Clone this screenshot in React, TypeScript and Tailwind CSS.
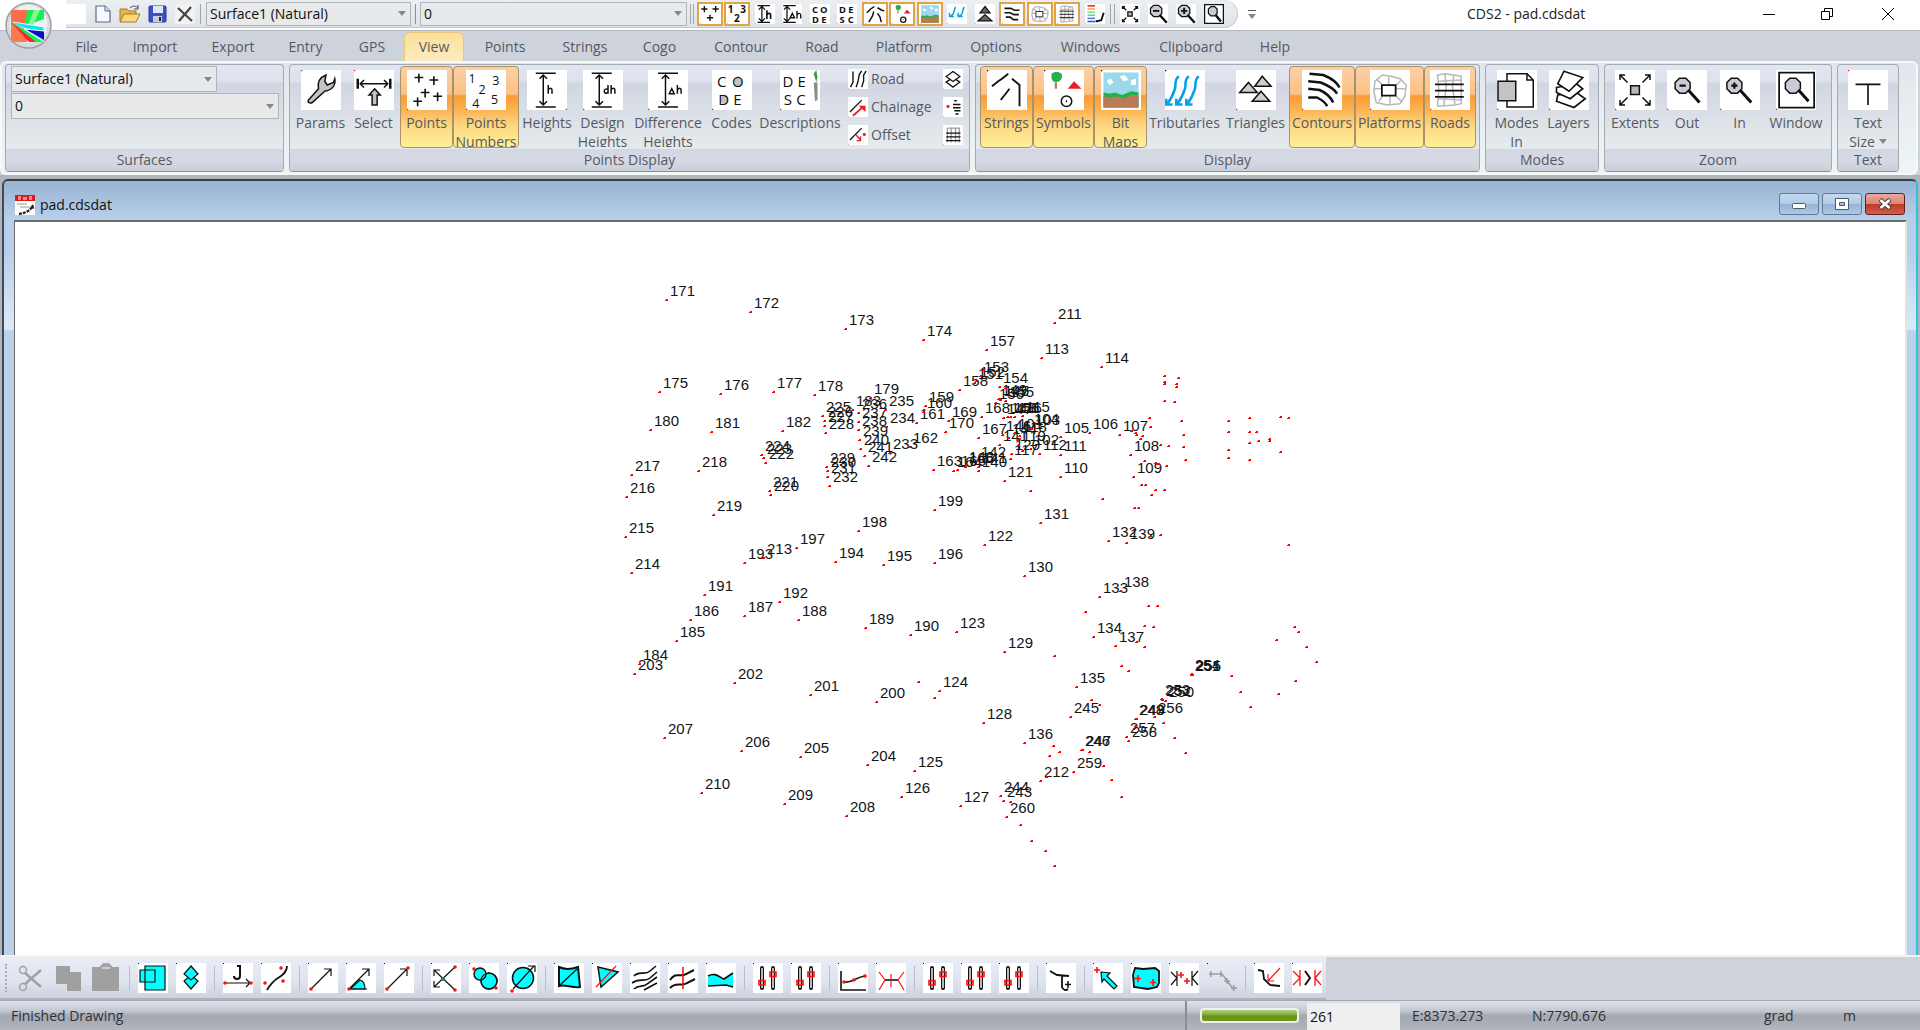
import { Fragment, type ReactNode } from "react";

const HOT = "border border-[#a89468] bg-[linear-gradient(180deg,#fbd0a8_0%,#fcc184_34%,#fb9a38_36%,#fcb04f_52%,#fdd882_74%,#fff09a_100%)]";

/* ---------- ribbon icons, drawn on a 32 x 32 grid ---------- */
const ICONS: Record<string, ReactNode> = {
  params: (
    <path d="M6 24 14 15C13 10 15 6 20 4L19 9 21 12 26 10 27 7C28 12 25 16 19 17L9 26C7 27 5 26 6 24Z" fill="#c4c4c4" />
  ),
  select: (
    <>
      <path d="M3 7V15M29 7V15" strokeWidth="2" />
      <path d="M5 11H27M8 8 5 11 8 14M24 8 27 11 24 14" />
      <path d="M16.500 15 21 20H18.500V28H14.500V20H12Z" fill="#c4c4c4" />
    </>
  ),
  points: <path d="M6 6H13M9.500 3V10M18 8H25M21.500 5V12M11 18H18M14.500 15V22M5 25H12M8.500 22V29M21 21H28M24.500 18V25" strokeWidth="1.300" />,
  points3: <path d="M2 8H12M7 3V13M20 8H30M25 3V13M11 22H21M16 17V27" strokeWidth="2.200" />,
  numbers: (
    <g stroke="none" fill="#111" fontSize="10" fontFamily="Open Sans, sans-serif">
      <text x="2" y="10">1</text><text x="21" y="12">3</text><text x="10" y="19">2</text><text x="5" y="30">4</text><text x="20" y="27">5</text>
    </g>
  ),
  numbers3: (
    <g stroke="none" fill="#111" fontSize="16" fontWeight="700" fontFamily="Open Sans, sans-serif">
      <text x="1" y="14">1</text><text x="21" y="14">3</text><text x="11" y="29">2</text>
    </g>
  ),
  heights: (
    <>
      <path d="M7 2.500H23M7 29.500H23M13 4V28M10 7 13 4 16 7M10 25 13 28 16 25" />
      <path d="M17 12V19M17 16C18 14 20 14 20 16V19" strokeWidth="1.200" />
    </>
  ),
  heights2: (
    <>
      <path d="M4 2.500H24M4 29.500H24M11 4V28M6 9 11 4 16 9M6 23 11 28 16 23" />
      <path d="M19 10V24M19 18C20 14 25 14 25 18V24" strokeWidth="2.600" />
    </>
  ),
  design: (
    <>
      <path d="M7 2.500H23M7 29.500H23M13 4V28M10 7 13 4 16 7M10 25 13 28 16 25" />
      <path d="M20 12V19M20 15.500C16 13.500 16 20.500 20 18M22.500 12V19M22.500 16C23.500 14 25.500 14 25.500 16V19" strokeWidth="1.200" />
    </>
  ),
  difference: (
    <>
      <path d="M8 2.500H24M8 29.500H24M14 4V28M11 7 14 4 17 7M11 25 14 28 17 25" />
      <path d="M17 19 19 15 21 19ZM23.500 12V19M23.500 16C24.500 14 26.500 14 26.500 16V19" strokeWidth="1.200" />
    </>
  ),
  difference2: (
    <>
      <path d="M2 2.500H22M2 29.500H22M8 4V28M3 9 8 4 13 9M3 23 8 28 13 23" />
      <path d="M13 22 16.500 15 20 22ZM24 11V23M24 18C25 14 30 14 30 18V23" strokeWidth="2.200" />
    </>
  ),
  codes: (
    <g fontSize="12" fontFamily="Open Sans, sans-serif" stroke="none" fill="#111">
      <ellipse cx="21" cy="9" rx="3" ry="4" fill="#c4c4c4" /><ellipse cx="10" cy="23.500" rx="3" ry="4" fill="#c4c4c4" />
      <text x="4" y="13.500">C</text><text x="16" y="13.500">O</text><text x="5" y="28">D</text><text x="17" y="28">E</text>
    </g>
  ),
  desc: (
    <g fontSize="12" fontFamily="Open Sans, sans-serif" stroke="none" fill="#111">
      <text x="2" y="13.500">D</text><text x="14" y="13.500">E</text><text x="3" y="28">S</text><text x="13" y="28">C</text>
      <path d="M27 3 29 0 30 6 29 10Z" fill="#3a9a4a" /><path d="M27 10H30V24L28 25Z" fill="#8a8a8a" />
    </g>
  ),
  desc2: (
    <g fontSize="15" fontWeight="700" fontFamily="Open Sans, sans-serif" stroke="none" fill="#111">
      <text x="3" y="14">D</text><text x="18" y="14">E</text><text x="4" y="30">S</text><text x="17" y="30">C</text>
    </g>
  ),
  codes2: (
    <g fontSize="15" fontWeight="700" fontFamily="Open Sans, sans-serif" stroke="none" fill="#111">
      <text x="3" y="14">C</text><text x="16" y="14">O</text><text x="3" y="30">D</text><text x="18" y="30">E</text>
    </g>
  ),
  strings: <path d="M4 13 9 9 12 7 17 3M20 7 26 12V29M18 15 11 24" strokeWidth="1.500" />,
  strings2: <path d="M3 14 9 8 15 4M20 6 27 10 31 11M14 12 12 19 6 29M20 15 24 21 26 29" strokeWidth="2.400" />,
  symbols: (
    <>
      <path d="M9.500 10V15" stroke="#b97a57" strokeWidth="1.800" />
      <path d="M6 3C8 1 12 1 14 3 15 6 14 8 12 9 9 11 7 9 6 7Z" fill="#22b14c" stroke="none" />
      <path d="M24 9 30 15H19Z" fill="#ed1c24" stroke="none" />
      <circle cx="18" cy="25" r="4.200" /><path d="M17.500 25H18.500" strokeWidth="1.500" />
    </>
  ),
  bitmap: (
    <g stroke="none">
      <rect x="2" y="2" width="28" height="28" fill="#99d9ea" />
      <path d="M5 8 8 7 10 10 7 12 5 10ZM15 5 19 4 22 8 18 9ZM24 8 28 7V12L24 12Z" fill="#fff" />
      <path d="M2 18 7 19 11 18 17 20 24 17 30 18V30H2Z" fill="#22b14c" />
      <path d="M2 21 8 22 13 21 18 23 24 20 30 20V30H2Z" fill="#b97a57" />
    </g>
  ),
  tributaries: <path d="M11 5C7 8 9 12 8 15S5 23 2 27M1 23V27.500H6M19 5C15 8 17 12 16 15S13 23 10 27M9 23V27.500H14M27 5C23 8 25 12 24 15S21 23 18 27M17 23V27.500H22" stroke="#00a2e8" strokeWidth="2" />,
  tributaries2: <path d="M14 5C10 8 13 13 9 17L5 20M4 14V20H11M28 5C24 8 27 13 23 17L19 20M18 14V20H25" stroke="#00a2e8" strokeWidth="2.400" />,
  triangles: <path d="M21 5 28 13H15ZM10 10 17 18H3ZM20 17 27 25H13Z" fill="#cfcfcf" />,
  triangles2: <path d="M16 4 24 14H8ZM16 17 27 27H5Z" fill="#666" />,
  contours: <path d="M6 3 17 4C22 6 28 10 30 14M5 9 15 10C20 12 26 15 28 19M5 15 14 16C19 18 23 22 25 26M5 22 12 22C16 24 19 26 20 29" strokeWidth="2" />,
  contours2: <path d="M4 7H14L20 10H28M4 14H13L19 17H27M6 21H13L18 25H26" strokeWidth="2.600" />,
  platforms: (
    <>
      <path d="M10 4 17 5 24 7 29 12 28 21 24 27 14 28 5 26 3 17 4 9ZM15 5V12M16 21V27M3 15H9M21 15H28M6 8 10 12M25 8 21 12M7 25 10 21M26 26 21 21" stroke="#b8b8b8" />
      <path d="M9.500 12H20.500V20.500H9.500Z" fill="#fff" strokeWidth="1.400" />
    </>
  ),
  roads: (
    <>
      <path d="M6 4 12 3 25 5V27L20 28 6 29M12 3 13 14 11 28M19 4 18 13 20 28M7 9 25 8M7 23 26 24M6 4 7 16 6 29" stroke="#b8b8b8" />
      <path d="M4 11.500H27M4 16.500H27M4 21.500H27" strokeWidth="1.400" />
    </>
  ),
  modes: (
    <>
      <path d="M8 3H24L29 8V29.500H8Z" fill="#fff" /><path d="M24 3V8H29" />
      <path d="M.800 9H15V24.500H.800Z" fill="#c3c3c3" />
    </>
  ),
  layers: (
    <g fill="#fff" strokeWidth="1.300">
      <path d="M7 20 22 18 29 23 20 30 6 25Z" /><path d="M6 14 22 11 27 15 17 23 6 18Z" /><path d="M12 1 27 6 16 17 7 11Z" />
    </g>
  ),
  extents: (
    <>
      <path d="M12.500 12.500H19.500V19.500H12.500Z" fill="#b8b8b8" />
      <path d="M4 4 10 10M4 8V4H8M28 4 22 10M24 4H28V8M4 28 10 22M4 24V28H8M28 28 22 22M24 28H28V24" />
    </>
  ),
  out: (<><path d="M17 16 26 26" strokeWidth="2.400" /><path d="M10 6.500H15L18.500 10V15L15 18.500H10L6.500 15V10Z" fill="#c9ccd4" /><path d="M10 12.500H15" strokeWidth="1.800" /></>),
  in: (<><path d="M16 16 25 26" strokeWidth="2.400" /><path d="M9 6.500H14L17.500 10V15L14 18.500H9L5.500 15V10Z" fill="#c9ccd4" /><path d="M9 12.500H14M11.500 10V15" strokeWidth="1.800" /></>),
  window: (<><path d="M2.500 2H30.500V30H2.500Z" strokeWidth="1.400" /><path d="M18 16 26 25" strokeWidth="2.400" /><path d="M11 6.500H16L19.500 10V15L16 18.500H11L7.500 15V10Z" fill="#c9ccd4" /></>),
  out2: (<><path d="M19 18 30 30" strokeWidth="4" /><path d="M9 2H17L22 7V15L17 20H9L4 15V7Z" fill="#c9ccd4" /><path d="M8 11H18" strokeWidth="3" /></>),
  in2: (<><path d="M19 18 30 30" strokeWidth="4" /><path d="M9 2H17L22 7V15L17 20H9L4 15V7Z" fill="#c9ccd4" /><path d="M8 11H18M13 6V16" strokeWidth="3" /></>),
  window2: (<><path d="M1 1H31V31H1Z" /><path d="M19 18 27 28" strokeWidth="4" /><path d="M11 4H17L21 8V15L17 19H11L7 15V8Z" fill="#c9ccd4" /></>),
  text: <path d="M6 11.500H26M16 11.500V28" strokeWidth="1.300" />,
  road: <path d="M4 29 8 21 8 4M13 29 16 20 18 9 22 3M22 29 25 19 25 10 29 3" strokeWidth="2.200" />,
  chainage: (<><path d="M3 24 22 5" strokeWidth="2" /><path d="M8 30 25 15" stroke="#ed1c24" strokeWidth="3" /><path d="M17 14H28V24Z" fill="#ed1c24" stroke="none" /></>),
  offset: (<><path d="M3 24 22 5" strokeWidth="2" /><path d="M13 16 20 24M20 18V25H14" stroke="#ed1c24" strokeWidth="2.200" /><circle cx="26" cy="15" r="2.500" fill="#ed1c24" stroke="none" /></>),
  layer2: <path d="M16 4 27 12 16 20 5 12ZM11 17 5 21 16 29 27 21 21 17" strokeWidth="2" fill="none" />,
  levels: (<><circle cx="8" cy="15" r="2.500" fill="#ed1c24" stroke="none" /><path d="M18 6H22M16 12H28M16 17H28M18 22H28M20 27H25" strokeWidth="2.400" /></>),
  grid: (<><path d="M7 5H26V28M7 5V28M13 5V28M20 5V28" stroke="#999" strokeWidth="2" /><path d="M5 13H28M5 19H28M5 25H28" strokeWidth="2.200" /></>),
  palette: (
    <g fill="none" strokeWidth="2.400">
      <path d="M4 3H16" stroke="#ed1c24" /><path d="M4 8H16" stroke="#ff9a4a" /><path d="M4 13H16" stroke="#7de05a" /><path d="M4 18H16" stroke="#40d8c0" /><path d="M4 23H16" stroke="#3f7be8" /><path d="M4 28H16" stroke="#4a3fd0" />
      <path d="M30 14 26 26 17 28" stroke="#111" strokeWidth="3" />
    </g>
  ),
};

type Corner = "tl" | "bl" | "br";
function Icon({ name, corner, color = "#e02020", className, thick = false }: { name: string; corner?: Corner; color?: string; className: string; thick?: boolean }) {
  return (
    <svg viewBox="0 0 32 32" className={className} fill="none" stroke="#111" strokeWidth={thick ? 2 : 1.2} aria-hidden="true">
      <rect width="32" height="32" fill="#fff" stroke="none" />
      {ICONS[name]}
      {corner && <rect x={corner === "br" ? 31 : 0} y={corner === "tl" ? 0 : 31} width="1" height="1" fill={color} stroke="none" />}
    </svg>
  );
}

/* ---------- ribbon parts ---------- */
function Caret() {
  return <svg viewBox="0 0 8 5" className="h-[5px] w-2" aria-hidden="true"><path d="M0 0H8L4 5Z" fill="#85878b" /></svg>;
}

function Combo({ label, value, className }: { label: string; value: string; className: string }) {
  return (
    <div className={`relative ${className}`}>
      <select aria-label={label} defaultValue={value} className="block h-full w-full appearance-none border border-[#b1b5ba] bg-[#e7e9eb] pl-[3px] pr-5 text-sm text-[#111] outline-none">
        <option>{value}</option>
      </select>
      <span className="pointer-events-none absolute inset-y-0 right-[5px] flex items-center"><Caret /></span>
    </div>
  );
}

function Big({ icon, lines, w, on, corner = "bl", color, menu }: { icon: string; lines: string[]; w: string; on?: boolean; corner?: Corner; color?: string; menu?: boolean }) {
  return (
    <button type="button" aria-pressed={on} className={`flex h-[82px] shrink-0 flex-col items-center overflow-hidden rounded-sm whitespace-nowrap ${w} ${on ? HOT : "border border-transparent"}`}>
      <Icon name={icon} corner={corner} color={color} className="mt-[3px] h-10 w-10 shrink-0" />
      <span className="mt-[3px] block text-center text-sm leading-[19px]">
        {lines.map((l, i) => (
          <span key={l} className="flex items-center justify-center gap-1">{l}{menu && i === 1 && <Caret />}</span>
        ))}
      </span>
    </button>
  );
}

function Group({ title, w, children }: { title: string; w: string; children: ReactNode }) {
  return (
    <section aria-label={title} className={`flex h-[108px] shrink-0 flex-col overflow-hidden rounded-[4px] border border-[#a5a9b0] border-b-[#8c9096] bg-[linear-gradient(180deg,#e2e6f0_0%,#dde1ec_16%,#d0d5e2_17%,#dce1e8_50%,#ebf1f0_100%)] ${w}`}>
      <div className="flex h-[84px] shrink-0 pl-1 pt-px">{children}</div>
      <div className="grow bg-[linear-gradient(180deg,#d2d7e3,#d6dae5_50%,#caced8)] text-center text-sm leading-[21px]">{title}</div>
    </section>
  );
}

function Small({ icon, label, text }: { icon: string; label: string; text?: boolean }) {
  return (
    <button type="button" aria-label={label} className="flex h-5 items-center gap-[3px] text-sm">
      <Icon name={icon} corner="bl" className="h-5 w-5" />
      {text && label}
    </button>
  );
}

const TABS: [string, string][] = [
  ["File", "w-[57px]"], ["Import", "w-20"], ["Export", "w-[76px]"], ["Entry", "w-[69px]"], ["GPS", "w-16"], ["View", "w-[60px]"],
  ["Points", "w-[82px]"], ["Strings", "w-[78px]"], ["Cogo", "w-[71px]"], ["Contour", "w-[92px]"], ["Road", "w-[70px]"], ["Platform", "w-[94px]"],
  ["Options", "w-[90px]"], ["Windows", "w-[99px]"], ["Clipboard", "w-[102px]"], ["Help", "w-[66px]"],
];

const QUICK: [string, string, boolean][] = [
  ["points3", "Points", true], ["numbers3", "Point numbers", true], ["heights2", "Heights", false], ["difference2", "Difference heights", false],
  ["codes2", "Codes", false], ["desc2", "Descriptions", false], ["strings2", "Strings", true], ["symbols", "Symbols", true],
  ["bitmap", "Bit maps", true], ["tributaries2", "Tributaries", false], ["triangles2", "Triangles", false], ["contours2", "Contours", true],
  ["platforms", "Platforms", true], ["roads", "Roads", true], ["palette", "Colours", false],
];
const QUICK_ZOOM: [string, string][] = [["extents", "Extents"], ["out2", "Zoom out"], ["in2", "Zoom in"], ["window2", "Zoom window"]];

function QuickBar() {
  const plain = "flex h-6 w-[26px] items-center justify-center";
  return (
    <div className="flex h-[28px] items-center rounded-r-full border-b border-r border-[#c3c6ca] bg-[linear-gradient(180deg,#eceff2,#e0e4e8)] pr-[10px]">
      <button type="button" aria-label="Blank" className="h-5 w-5 bg-white" />
      <button type="button" aria-label="New" className="ml-[7px] h-5 w-5">
        <svg viewBox="0 0 20 20"><path d="M3 2H12L17 7V18H3Z" fill="#f6faff" stroke="#5a6a8c" strokeWidth="1.200" /><path d="M12 2V7H17" fill="#cfe0f4" stroke="#5a6a8c" /></svg>
      </button>
      <button type="button" aria-label="Open" className="ml-[6px] h-5 w-[22px]">
        <svg viewBox="0 0 22 20"><path d="M1 5H8L10 7H17V17H1Z" fill="#e7b64a" stroke="#a5792a" /><path d="M5 10H21L17 18H1Z" fill="#fbd977" stroke="#a5792a" /><path d="M11 4C14 1 17 2 19 4M19 1V5H15" fill="none" stroke="#444" /></svg>
      </button>
      <button type="button" aria-label="Save" className="ml-[7px] h-5 w-5">
        <svg viewBox="0 0 20 20"><rect x="1" y="2" width="17" height="16" rx="1" fill="#3f50c8" stroke="#2c3790" /><path d="M5 2H15V9H5Z" fill="#dfe8f8" /><path d="M5 12H14V18H5Z" fill="#c8ccd8" /><path d="M11 13H13V17H11Z" fill="#223" /></svg>
      </button>
      <button type="button" aria-label="Close file" className="ml-[7px] h-5 w-5">
        <svg viewBox="0 0 20 20"><rect width="20" height="20" fill="#f2f2f2" /><path d="M3 4 17 17M16 3 4 17" stroke="#444" strokeWidth="2.200" /></svg>
      </button>
      <span className="mx-[5px] h-5 w-px bg-[#a2a5aa]" />
      <Combo label="Surface" value="Surface1 (Natural)" className="h-6 w-[205px]" />
      <span className="mx-1 h-5 w-px bg-[#8c9095]" />
      <Combo label="String" value="0" className="h-6 w-[267px]" />
      <span className="mx-[3px] h-5 w-[4px] border-x border-[#a2a5aa]" />
      <div className="flex items-center gap-px">
        {QUICK.map(([icon, label, on], i) => (
          <button key={label} type="button" aria-label={label} aria-pressed={on} className={`${plain} ${i % 2 ? "mr-px" : ""} ${on ? "border-2 border-[#dfa445] bg-white" : ""}`}>
            <Icon name={icon} corner="bl" className="h-5 w-5" thick />
          </button>
        ))}
      </div>
      <span className="mx-[2px] h-5 w-[5px] border-x border-[#a2a5aa]" />
      <div className="flex items-center gap-[2px]">
        {QUICK_ZOOM.map(([icon, label]) => (
          <button key={label} type="button" aria-label={label} className={plain}><Icon name={icon} className="h-5 w-5" thick /></button>
        ))}
      </div>
    </div>
  );
}

/* ---------- survey drawing ---------- */
const LABELLED: [number, number, number][] = [
  [171, 666, 299], [172, 750, 311], [173, 845, 328], [174, 923, 339], [175, 659, 391], [176, 720, 393], [177, 773, 391], [178, 814, 394],
  [179, 870, 397], [183, 852, 409], [236, 858, 412], [237, 858, 421], [238, 858, 429], [239, 859, 439], [240, 860, 448], [241, 864, 455],
  [242, 868, 465], [235, 885, 409], [234, 886, 426], [233, 889, 452], [161, 916, 422], [160, 923, 411], [159, 925, 405], [162, 909, 446],
  [225, 822, 415], [226, 824, 420], [227, 824, 425], [228, 825, 432], [180, 650, 429], [181, 711, 431], [182, 782, 430], [224, 761, 454],
  [223, 763, 457], [222, 765, 462], [217, 631, 474], [218, 698, 470], [216, 626, 496], [219, 713, 514], [215, 625, 536], [229, 826, 466],
  [230, 827, 470], [231, 827, 476], [232, 829, 485], [221, 769, 490], [220, 770, 494], [198, 858, 530], [199, 934, 509],
  [211, 1054, 322], [157, 986, 349], [113, 1041, 357], [114, 1101, 366], [158, 959, 389], [153, 980, 375], [152, 976, 380], [151, 974, 382],
  [154, 999, 386], [155, 1005, 400], [150, 995, 402], [149, 998, 398], [145, 1000, 399], [168, 981, 416], [147, 1003, 417], [148, 1007, 416],
  [116, 1014, 416], [156, 1010, 416], [115, 1022, 415], [103, 1031, 428], [104, 1030, 427], [167, 978, 437], [105, 1060, 436],
  [106, 1089, 432], [107, 1119, 434], [108, 1130, 454], [109, 1133, 476], [110, 1060, 476], [111, 1060, 454], [112, 1039, 453],
  [102, 1030, 448], [117, 1010, 458], [120, 1011, 453], [146, 1002, 434], [141, 999, 444], [118, 1019, 435], [119, 1018, 444],
  [144, 1008, 437], [101, 1014, 432], [121, 1004, 480], [163, 933, 469], [164, 953, 470], [165, 957, 469], [166, 965, 466],
  [143, 965, 465], [142, 977, 460], [169, 948, 420], [170, 945, 431], [140, 978, 470], [141, 978, 466],
  [214, 631, 572], [193, 744, 562], [213, 763, 557], [197, 796, 547], [194, 835, 561], [195, 883, 564], [196, 934, 562], [191, 704, 594],
  [192, 779, 601], [186, 690, 619], [187, 744, 615], [188, 798, 619], [189, 865, 627], [190, 910, 634], [123, 956, 631], [185, 676, 640],
  [184, 639, 663], [203, 634, 673], [202, 734, 682], [201, 810, 694], [200, 876, 701], [124, 939, 690], [207, 664, 737], [206, 741, 750],
  [205, 800, 756], [204, 867, 764], [125, 914, 770], [126, 901, 796], [210, 701, 792], [209, 784, 803], [208, 846, 815], [127, 960, 805],
  [131, 1040, 522], [122, 984, 544], [130, 1024, 575], [132, 1108, 540], [139, 1126, 542], [133, 1099, 596], [138, 1120, 590],
  [134, 1093, 636], [137, 1115, 645], [129, 1004, 651], [135, 1076, 686], [245, 1070, 716], [128, 983, 722], [136, 1024, 742],
  [212, 1040, 780], [259, 1073, 771], [244, 1000, 795], [243, 1003, 800], [260, 1006, 816], [246, 1081, 749], [247, 1082, 749],
  [257, 1126, 736], [258, 1128, 740], [248, 1135, 718], [249, 1136, 718], [256, 1154, 716], [252, 1162, 699], [253, 1161, 698], [250, 1165, 700],
  [254, 1191, 673], [255, 1192, 674], [251, 1191, 674],
];

const BARE: [number, number][] = [
  [1164, 375], [1164, 381], [1164, 383], [1178, 377], [1176, 383], [1176, 386], [1164, 400], [1174, 401], [1149, 417], [1150, 426], [1181, 420],
  [1183, 434], [1183, 446], [1185, 459], [1135, 432], [1136, 434], [1142, 435], [1140, 438], [1160, 444], [1168, 445], [1144, 460], [1155, 462],
  [1157, 463], [1166, 465], [1141, 484], [1145, 484], [1155, 489], [1164, 489], [1151, 494], [1102, 498], [1030, 490], [1228, 420], [1228, 431],
  [1228, 449], [1228, 457], [1249, 417], [1249, 431], [1256, 431], [1258, 440], [1249, 442], [1249, 459], [1269, 438], [1269, 440], [1280, 416],
  [1288, 417], [1280, 451], [1131, 430], [918, 681], [934, 697], [1134, 507], [1138, 507], [1160, 534], [1150, 535], [1288, 544], [1148, 605],
  [1157, 605], [1085, 611], [1144, 625], [1153, 626], [1144, 646], [1136, 641], [1054, 655], [1121, 665], [1128, 670], [1091, 699], [1099, 704],
  [1276, 639], [1294, 626], [1298, 631], [1306, 646], [1316, 661], [1295, 680], [1278, 693], [1231, 675], [1240, 691], [1250, 706], [1163, 722],
  [1174, 737], [1185, 752], [1158, 707], [1135, 725], [1053, 745], [1059, 751], [1049, 755], [1089, 751], [1103, 765], [1111, 779], [1121, 796],
  [1046, 776], [1010, 801], [1020, 824], [1031, 840], [1045, 850], [1054, 865], [1005, 387], [976, 380], [983, 369], [1019, 438], [1022, 450],
];

function SurveyPlot() {
  return (
    <svg role="img" aria-label="Survey points" className="block h-full w-full" fontFamily="Liberation Sans, Arial, sans-serif" fontSize="15">
      <g transform="translate(-15 -221)">
        {LABELLED.map(([n, x, y], i) => <text key={i} x={x + 4} y={y - 4} fill="#141414">{n}</text>)}
        <g fill="#ff0000" shapeRendering="crispEdges">
          {LABELLED.map(([, x, y], i) => <path key={i} d={`M${x} ${y - 1}h2v2h-3v-1h1z`} />)}
          {BARE.map(([x, y], i) => <path key={i} d={`M${x} ${y - 1}h2v2h-3v-1h1z`} />)}
        </g>
      </g>
    </svg>
  );
}

/* ---------- bottom toolbar, icons on a 30 x 30 grid ---------- */
const R = "#ff1010";
const C = "#00ffff";
const sliders = (
  <>
    <path d="M9 5V25M20 5V25" stroke="#111" strokeWidth="4" strokeLinecap="round" />
    <path d="M9 5V25M20 5V25" stroke="#b8b8b8" strokeWidth="2" />
    <path d="M6 17.500H12V22H6ZM17 9H23V13.500H17Z" stroke={R} strokeWidth="1.600" />
  </>
);
const dot = (x: number, y: number) => <circle cx={x} cy={y} r="1.800" fill={R} stroke="none" />;

const TOOLS: [string, ReactNode][][] = [
  [
    ["Copy to layer", <><path d="M7 3H27V27H7Z" fill={C} /><path d="M2 7H17V19H2Z" fill={C} /><path d="M7 7V19" /></>],
    ["Stack", <><path d="M15 12 22 18 15 26 8 18Z" fill={C} /><path d="M15 3 22 11 15 17 8 11Z" fill={C} /></>],
  ],
  [
    ["Join", <><path d="M17 3V13C17 17 11 17 11 13M14 3H18" strokeWidth="2" /><path d="M2 20H27M23 16 27 20 23 24" />{dot(2, 20)}{dot(28, 20)}</>],
    ["Curve", <><path d="M26 3C26 9 22 12 17 15S9 22 6 27" strokeWidth="1.800" />{dot(4, 20)}{dot(20, 5)}{dot(22, 18)}</>],
  ],
  [
    ["Bearing", <><path d="M4 25 23 6M16 6H23V13" />{dot(3, 26)}</>],
    ["Angle", <><path d="M4 26 14 17C18 18 19 22 19 26Z" fill={C} /><path d="M4 25 23 6M16 6H23V13M4 26H21" />{dot(3, 26)}</>],
    ["Line", <><path d="M4 25 23 6M16 6H23V13" />{dot(3, 26)}{dot(24, 5)}</>],
  ],
  [
    ["Intersect", <><path d="M24 4 3 24M3 7 24 27M3 13V7H9M3 18V24H9" />{dot(24, 4)}{dot(24, 27)}<circle cx="12" cy="16" r="2" fill="#108080" stroke="none" /></>],
    ["Circles", <><circle cx="20" cy="18" r="8" fill={C} strokeWidth="1.500" /><circle cx="11" cy="11" r="6" fill={C} strokeWidth="1.500" /><circle cx="20" cy="18" r="8" />{dot(5, 6)}{dot(27, 25)}</>],
    ["Circle line", <><circle cx="16" cy="15" r="10.500" fill={C} strokeWidth="1.500" /><path d="M6 26 27 3M21 3H28V9" />{dot(5, 28)}</>],
  ],
  [
    ["Area", <><path d="M5 4C11 7 18 6 24 4L26 24C18 25 10 21 5 23Z" fill={C} strokeWidth="2" /><path d="M6 22 23 6" /></>],
    ["Triangle", <><path d="M6 4 26 9 9 24Z" fill={C} strokeWidth="1.500" /><path d="M4 24 24 3" stroke={R} /></>],
    ["Contour lines", <path d="M4 13C9 7 15 13 20 8L26 3M2 20C10 14 14 20 20 15L27 9M4 26C9 21 13 25 17 21L27 14M14 27 27 20" strokeWidth="1.600" />],
    ["Section", <><path d="M2 17C8 8 13 15 18 11L26 7M2 25C8 18 14 24 19 20L27 16" strokeWidth="2" /><path d="M15 4V26" stroke={R} strokeWidth="1.600" /></>],
    ["Profile", <><path d="M2 13C9 9 13 14 18 16L27 10V24L20 22 2 23Z" fill={C} stroke="none" /><path d="M2 13C9 9 13 14 18 16L27 10M2 23 20 22 27 24" strokeWidth="1.700" /></>],
  ],
  [["Adjust start", sliders], ["Adjust end", sliders]],
  [
    ["Graph", <><path d="M3 8V27H28" strokeWidth="1.600" /><path d="M7 19C14 20 18 14 27 13" strokeWidth="1.700" />{dot(6, 19)}{dot(16, 17)}{dot(27, 13)}</>],
    ["Junction", <><path d="M9 17H22" strokeWidth="1.600" /><path d="M3 9 9 17 3 27M28 9 22 17 28 27M15 11V24" stroke={R} /></>],
  ],
  [["Adjust X", sliders], ["Adjust Y", sliders], ["Adjust Z", sliders]],
  [["String point", <><path d="M4 8 11 12 23 13M16 13V24C17 27 20 28 22 26" strokeWidth="1.800" /><path d="M22 18V25M19 21.500H25" strokeWidth="1.500" /></>]],
  [
    ["Pick", <><path d="M8 9 17 10 14 13 24 23 21 26 11 16 9 19Z" fill={C} /><path d="M4 4V10M1 7H7" stroke={R} strokeWidth="1.600" /></>],
    ["Region", <><path d="M4 5 12 6 24 5 28 8V20L26 24 17 26 3 24 2 12Z" fill={C} strokeWidth="1.800" /><path d="M7 12V19M3 15.500H10M22 16V23M19 19.500H25" stroke={R} strokeWidth="1.600" /></>],
    ["Break", <><path d="M2 9 8 15 2 22M8 8V23M23 8V23M29 8 23 15 29 22" /><path d="M12 9V15M9 12H15M18 15V21M15 18H21" stroke={R} strokeWidth="1.600" /></>],
    ["Extend", <g stroke="#9c9c9c" strokeWidth="1.500"><path d="M2 11H15L27 27M4 8V14M14 8V14M17 18H23M20 15V21M24 25H30M27 22V28" /></g>],
  ],
  [
    ["Fillet", <><path d="M4 7 9 8 10 16 16 22 26 23" strokeWidth="1.800" /><path d="M26 5 14 18M14 11V18H20" stroke={R} /></>],
    ["Chamfer", <><path d="M13 8 18 15 13 22" strokeWidth="2" /><path d="M1 8 8 15 1 22M8 7V23M23 7V23M29 8 23 15 29 22" stroke={R} strokeWidth="1.300" /></>],
  ],
];

function ToolDivider() {
  return <span className="h-6 w-px shrink-0 bg-[#b9bdc7]" />;
}

function BottomToolbar() {
  return (
    <div className="flex h-[45px] shrink-0 border-t-2 border-[#f3f3f3] bg-[#ced2db]">
      <div role="toolbar" aria-label="Drawing tools" className="flex items-center gap-2 border-b-2 border-[#aeb2bc] bg-[linear-gradient(180deg,#e9edf6,#dfe3ee_60%,#cdd2de)] pl-[5px] pr-1">
        <span className="h-7 w-0 border-l-2 border-dotted border-[#a8acb5]" />
        <button type="button" aria-label="Cut" disabled className="h-[30px] w-[30px]">
          <svg viewBox="0 0 30 30" fill="none" stroke="#a0a0a0" strokeWidth="2"><circle cx="8" cy="7" r="3.500" strokeWidth="1.500" /><circle cx="8" cy="24" r="3.500" strokeWidth="1.500" /><path d="M10 10 26 24M10 21 26 7" strokeWidth="2.400" /></svg>
        </button>
        <button type="button" aria-label="Copy" disabled className="h-[30px] w-[30px]">
          <svg viewBox="0 0 30 30" fill="#a0a0a0"><path d="M3 3H17V9H28V28H14V21H3Z" /></svg>
        </button>
        <button type="button" aria-label="Paste" disabled className="h-[30px] w-[30px]">
          <svg viewBox="0 0 30 30" fill="#a0a0a0"><path d="M1 4H28V28H1Z" /><path d="M10 3H20V7H10ZM12 3V1H18V3" fill="#ccc" stroke="#989898" strokeWidth="1.500" /></svg>
        </button>
        {TOOLS.map((set, g) => (
          <Fragment key={g}>
            <ToolDivider />
            {set.map(([label, art]) => (
              <button key={label} type="button" aria-label={label} disabled={label === "Extend"} className="h-[30px] w-[30px] shrink-0">
                <svg viewBox="0 0 30 30" fill="none" stroke="#111" strokeWidth="1.200">
                  {label !== "Extend" && <rect width="30" height="30" fill="#fff" stroke="none" />}
                  <rect width="1" height="1" fill="#111" stroke="none" />
                  {art}
                </svg>
              </button>
            ))}
          </Fragment>
        ))}
      </div>
    </div>
  );
}

export default function App() {
  return (
    <div className="flex h-screen flex-col overflow-hidden bg-[#ced2db] font-['Open_Sans',sans-serif] text-[#555961]">
      <header className="relative shrink-0">
        <div className="flex h-[31px] items-start border-b border-[#b4b8c0] bg-white">
          <div className="h-[30px] w-[66px] shrink-0" />
          <QuickBar />
          <button type="button" aria-label="Customize" className="ml-2 flex h-7 w-3 flex-col items-center justify-center gap-[3px]">
            <span className="h-px w-2 bg-[#555]" /><Caret />
          </button>
          <h1 className="ml-[209px] whitespace-nowrap text-sm leading-7 text-[#222]">CDS2 - pad.cdsdat</h1>
          <div className="ml-auto flex">
            <button type="button" aria-label="Minimize" className="flex h-7 w-[58px] items-center justify-center"><svg viewBox="0 0 12 12" className="h-3 w-3" stroke="#000"><path d="M0 6.500H12" /></svg></button>
            <button type="button" aria-label="Restore" className="flex h-7 w-[58px] items-center justify-center"><svg viewBox="0 0 12 12" className="h-3 w-3" fill="none" stroke="#000"><path d="M.500 3.500H8.500V11.500H.500ZM3.500 3.500V.500H11.500V8.500H8.500" /></svg></button>
            <button type="button" aria-label="Close" className="flex h-7 w-16 items-center justify-center"><svg viewBox="0 0 12 12" className="h-3 w-3" stroke="#000"><path d="M0 0 12 12M12 0 0 12" /></svg></button>
          </div>
        </div>

        <nav aria-label="Ribbon tabs" className="flex h-[30px] items-end pl-[58px] text-sm">
          {TABS.map(([name, w]) => (
            <button key={name} type="button" aria-current={name === "View" ? "page" : undefined} className={`h-[29px] shrink-0 text-center leading-7 ${w} ${name === "View" ? "rounded-t-md border-x border-t border-[#e8c877] bg-[linear-gradient(180deg,#fbdf9c,#fdebc0)]" : ""}`}>
              {name}
            </button>
          ))}
        </nav>

        <button type="button" aria-label="Application menu" className="absolute left-[5px] top-[2px] h-[47px] w-[47px]">
          <svg viewBox="0 0 47 47">
            <circle cx="23.500" cy="23.500" r="22.500" fill="#d7d9dd" stroke="#9b9ea4" strokeWidth="1.500" />
            <circle cx="23.500" cy="22" r="19" fill="#eef0f2" />
            <path d="M6 8H22V24L6 20Z" fill="#ff6a4a" />
            <path d="M22 8H39V17L20 24Z" fill="#10f050" />
            <path d="M29 8H35L28 23H23Z" fill="#8cf590" />
            <path d="M6 20 39 25V29L20 26Z" fill="#00e8ff" />
            <path d="M6 20 22 28V40H6Z" fill="#ff7a4a" />
            <path d="M6 20 24 32 31 40H24Z" fill="#ff1e3c" />
            <path d="M6 20 39 39V40H31Z" fill="#10f050" />
            <path d="M20 27 39 29V38Z" fill="#0a10c8" />
            <path d="M8 20 39 25V29L19 27 39 40" fill="none" stroke="#e8fff4" />
          </svg>
        </button>

        <div className="mr-[2px] flex h-[114px] gap-[5px] rounded-md border-2 border-[#f6f8fa] bg-[linear-gradient(180deg,#e2e6ec,#eef6f5)] pl-[3px] pt-px">
          <Group title="Surfaces" w="w-[279px]">
            <div className="flex w-full flex-col gap-px pl-px">
              <Combo label="Ribbon surface" value="Surface1 (Natural)" className="h-[26px] w-[206px]" />
              <Combo label="Ribbon string" value="0" className="h-[26px] w-[268px]" />
            </div>
          </Group>
          <Group title="Points Display" w="w-[681px]">
            <Big icon="params" lines={["Params"]} w="w-[53px]" corner="tl" />
            <Big icon="select" lines={["Select"]} w="w-[53px]" corner="tl" />
            <Big icon="points" lines={["Points"]} w="w-[53px]" on />
            <Big icon="numbers" lines={["Points", "Numbers"]} w="w-[66px]" on />
            <Big icon="heights" lines={["Heights"]} w="w-14" corner="br" />
            <Big icon="design" lines={["Design", "Heights"]} w="w-[55px]" />
            <Big icon="difference" lines={["Difference", "Heights"]} w="w-[76px]" />
            <Big icon="codes" lines={["Codes"]} w="w-[51px]" />
            <Big icon="desc" lines={["Descriptions"]} w="w-[86px]" />
            <div className="ml-[5px] flex w-[95px] flex-col gap-2 pt-[3px]">
              <Small icon="road" label="Road" text />
              <Small icon="chainage" label="Chainage" text />
              <Small icon="offset" label="Offset" text />
            </div>
            <div className="flex flex-col gap-2 pt-[3px]">
              <Small icon="layer2" label="Layer" />
              <Small icon="levels" label="Levels" />
              <Small icon="grid" label="Grid" />
            </div>
          </Group>
          <Group title="Display" w="w-[505px]">
            <Big icon="strings" lines={["Strings"]} w="w-[53px]" on corner="tl" color="#111" />
            <Big icon="symbols" lines={["Symbols"]} w="w-[61px]" on corner="tl" color="#111" />
            <Big icon="bitmap" lines={["Bit", "Maps"]} w="w-[53px]" on corner="tl" color="#111" />
            <Big icon="tributaries" lines={["Tributaries"]} w="w-[75px]" corner="tl" color="#111" />
            <Big icon="triangles" lines={["Triangles"]} w="w-[67px]" />
            <Big icon="contours" lines={["Contours"]} w="w-[66px]" on />
            <Big icon="platforms" lines={["Platforms"]} w="w-[69px]" on />
            <Big icon="roads" lines={["Roads"]} w="w-[52px]" on />
          </Group>
          <Group title="Modes" w="w-[114px]">
            <Big icon="modes" lines={["Modes", "In"]} w="w-[53px]" />
            <Big icon="layers" lines={["Layers"]} w="w-[51px]" />
          </Group>
          <Group title="Zoom" w="w-[228px]">
            <Big icon="extents" lines={["Extents"]} w="w-[52px]" />
            <Big icon="out" lines={["Out"]} w="w-[52px]" />
            <Big icon="in" lines={["In"]} w="w-[53px]" />
            <Big icon="window" lines={["Window"]} w="w-[60px]" />
          </Group>
          <Group title="Text" w="w-[62px]">
            <Big icon="text" lines={["Text", "Size"]} w="w-[52px]" corner="tl" menu />
          </Group>
        </div>
      </header>

      <main className="flex min-h-0 grow flex-col bg-[#b0b4be] px-[2px] pt-1">
        <section aria-label="pad.cdsdat" className="flex min-h-0 grow flex-col rounded-t-md border-x-2 border-t-2 border-l-[#444a52] border-r-[#28c4dc] border-t-[#3a3d42] bg-[linear-gradient(180deg,#98b4d2_0px,#b7cfea_38px,#b7cfea_70px,#dcebf8_148px,#b9d1ea_150px)] pl-[10px] pr-[9px]">
          <div className="flex h-[39px] shrink-0 items-center pl-px pt-2">
            <svg viewBox="0 0 20 20" className="h-5 w-5" aria-hidden="true">
              <rect width="20" height="20" fill="#fff" /><path d="M0 0H20V6H0Z" fill="#e01818" /><path d="M3 2H6M3 4H6M9 2V5M11 2V5M14 2H17M14 4H17" stroke="#fff" /><path d="M2 9H12M5 12H15" stroke="#999" /><path d="M4 19C9 18 15 17 18 10M16 12 20 13" fill="none" stroke="#222" strokeWidth="2.200" strokeDasharray="3 1" />
            </svg>
            <h2 className="ml-[5px] text-sm text-[#111]">pad.cdsdat</h2>
            <div className="ml-auto mr-[2px] flex gap-[3px] pb-[2px]">
              <button type="button" aria-label="Minimize document" className="flex h-[22px] w-10 items-center justify-center rounded-[3px] border border-[#5f7896] bg-[linear-gradient(180deg,#c6daee_0%,#b2cae4_48%,#94b2d4_50%,#b0cae6_100%)]">
                <svg viewBox="0 0 14 8" className="mt-1 h-2 w-[14px]"><rect x=".5" y="1.500" width="13" height="5" rx="1" fill="#fff" stroke="#4c5a6c" /></svg>
              </button>
              <button type="button" aria-label="Maximize document" className="flex h-[22px] w-10 items-center justify-center rounded-[3px] border border-[#5f7896] bg-[linear-gradient(180deg,#c6daee_0%,#b2cae4_48%,#94b2d4_50%,#b0cae6_100%)]">
                <svg viewBox="0 0 14 12" className="h-3 w-[14px]"><path d="M.500 .500H13.500V11.500H.500ZM4.500 4.500H9.500V7.500H4.500Z" fill="#fff" fillRule="evenodd" stroke="#4c5a6c" /></svg>
              </button>
              <button type="button" aria-label="Close document" className="flex h-[22px] w-10 items-center justify-center rounded-[3px] border border-[#6a1f1c] bg-[linear-gradient(180deg,#eaa99c_0%,#dc8576_48%,#bb3a22_50%,#d0604a_100%)]">
                <svg viewBox="0 0 14 12" className="h-3 w-[14px]"><path d="M2 1.500 12 10.500M12 1.500 2 10.500" stroke="#4c3a42" strokeWidth="4.500" /><path d="M2.500 2 11.500 10M11.500 2 2.500 10" stroke="#fff" strokeWidth="2.600" /></svg>
              </button>
            </div>
          </div>
          <div className="min-h-0 grow border-l border-r-2 border-t-2 border-l-[#6a6a6a] border-r-[#e3e3e3] border-t-[#6a6a6a] bg-white">
            <SurveyPlot />
          </div>
        </section>
      </main>

      <BottomToolbar />

      <footer className="flex h-[30px] shrink-0 items-center border-t border-[#a4a7ae] bg-[linear-gradient(180deg,#e0e2e9_0%,#c2c6d0_35%,#a5a9b1_50%,#a9adb4_75%,#b4b8be_100%)] text-sm text-[#2f3238]">
        <span className="w-[1185px] pl-[11px]">Finished Drawing</span>
        <span className="h-full w-[2px] bg-[#8b8e94]" />
        <div role="progressbar" aria-label="Progress" aria-valuenow={100} className="ml-[13px] h-[15px] w-[99px] rounded-sm border-2 border-[#f0f0f0] bg-[linear-gradient(180deg,#b4cf82_0%,#8db348_35%,#669418_55%,#6c981e_100%)]" />
        <input aria-label="Point number" defaultValue="261" className="ml-2 h-[27px] w-[93px] self-end bg-[#eee] pl-[3px] text-sm text-[#111] outline-none" />
        <span className="ml-3 w-[120px]">E:8373.273</span>
        <span>N:7790.676</span>
        <span className="ml-auto w-[79px]">grad</span>
        <span className="w-[77px]">m</span>
      </footer>
    </div>
  );
}
